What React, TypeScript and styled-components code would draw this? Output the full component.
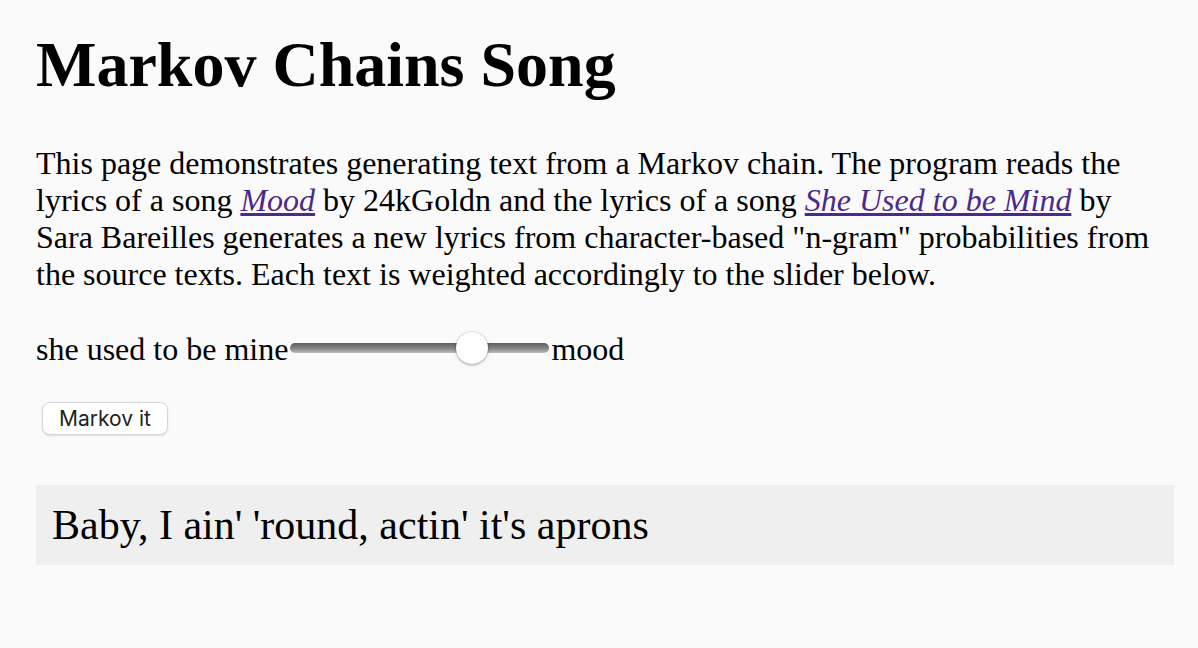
import React, { useState } from "react";
import styled, { createGlobalStyle } from "styled-components";

const Global = createGlobalStyle`
  html, body {
    margin: 0;
    padding: 0;
    background: #fafafa;
  }
  body {
    font-family: "Liberation Serif", "Times New Roman", serif;
    color: #000;
  }
`;

const Page = styled.main`
  padding: 0 24px 40px 36px;
`;

const Title = styled.h1`
  font-family: "Liberation Serif", "Times New Roman", serif;
  font-size: 64px;
  font-weight: bold;
  margin: 28px 0 43px;
  line-height: normal;
`;

const Intro = styled.p`
  font-size: 32px;
  line-height: normal;
  margin: 0 0 38px;
`;

const SongLink = styled.a`
  color: #4b2a8c;
  font-style: italic;
  text-decoration: underline;
`;

const SliderRow = styled.div`
  display: flex;
  align-items: center;
  font-size: 32px;
  line-height: normal;
  margin: 0 0 34px;
`;

const Range = styled.input`
  -webkit-appearance: none;
  appearance: none;
  width: 259px;
  height: 32px;
  margin: 0 2px 0 2px;
  padding: 0;
  background: transparent;
  position: relative;
  top: -2px;

  &::-webkit-slider-runnable-track {
    height: 10px;
    border-radius: 5px;
    background: linear-gradient(to bottom, #5e5e5e 0%, #8a8a8a 60%, #bdbdbd 100%);
  }
  &::-webkit-slider-thumb {
    -webkit-appearance: none;
    appearance: none;
    width: 32px;
    height: 32px;
    border-radius: 50%;
    background: #fff;
    margin-top: -11px;
    box-shadow: 0 1px 3px rgba(0, 0, 0, 0.35), 0 0 0 0.5px rgba(0, 0, 0, 0.08);
  }
  &::-moz-range-track {
    height: 10px;
    border-radius: 5px;
    background: linear-gradient(to bottom, #5e5e5e 0%, #8a8a8a 60%, #bdbdbd 100%);
  }
  &::-moz-range-thumb {
    width: 32px;
    height: 32px;
    border: none;
    border-radius: 50%;
    background: #fff;
    box-shadow: 0 1px 3px rgba(0, 0, 0, 0.35);
  }
`;

const Button = styled.button`
  font-family: "Inter", "Liberation Sans", Arial, sans-serif;
  font-size: 21px;
  color: #222;
  background: #fff;
  border: 1px solid #d6d6d6;
  border-radius: 8px;
  height: 33px;
  padding: 0 16px;
  margin: 0 0 0 6px;
  box-shadow: 0 1px 2px rgba(0, 0, 0, 0.12);
  cursor: pointer;
`;

const ButtonRow = styled.div`
  margin: 0 0 50px;
`;

const Output = styled.div`
  background: #efefef;
  padding: 0 16px;
  height: 80px;
  display: flex;
  align-items: center;
  font-size: 42px;
`;

export default function App() {
  const [value, setValue] = useState(73);
  return (
    <>
      <Global />
      <Page>
        <Title>Markov Chains Song</Title>
        <Intro>
          This page demonstrates generating text from a Markov chain. The program reads the lyrics of a song{" "}
          <SongLink href="#">Mood</SongLink> by 24kGoldn and the lyrics of a song{" "}
          <SongLink href="#">She Used to be Mind</SongLink> by Sara Bareilles generates a new lyrics from
          character-based "n-gram" probabilities from the source texts. Each text is weighted accordingly to
          the slider below.
        </Intro>
        <SliderRow>
          <span>she used to be mine</span>
          <Range
            type="range"
            min={0}
            max={100}
            value={value}
            onChange={(e) => setValue(Number(e.target.value))}
          />
          <span>mood</span>
        </SliderRow>
        <ButtonRow>
          <Button type="button">Markov it</Button>
        </ButtonRow>
        <Output>Baby, I ain' 'round, actin' it's aprons</Output>
      </Page>
    </>
  );
}
